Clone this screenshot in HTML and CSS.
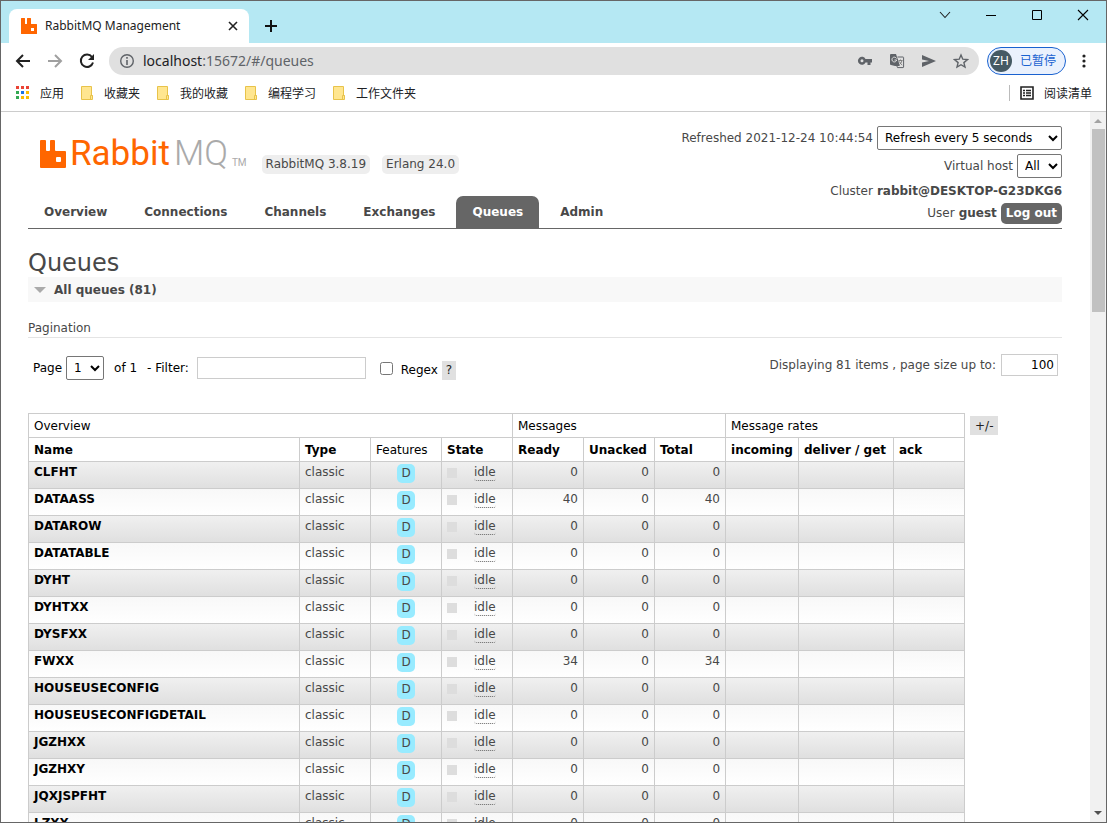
FILE: index.html
```html
<!DOCTYPE html>
<html lang="en">
<head>
<meta charset="utf-8">
<title>RabbitMQ Management</title>
<link rel="stylesheet" href="styles.css">
</head>
<body>
<div class="window">
  <div class="tabstrip">
    <div class="tab">
      <svg class="favicon" width="16" height="16" viewBox="0 0 16 16"><path fill="#f60" d="M.500 0h3q.500 0 .500.500v5q0 .500.500.500h1q.500 0 .500-.500v-5Q6 0 6.500 0h3q.500 0 .500.500v5q0 .500.500.500h5q.500 0 .500.500v9q0 .500-.500.500h-15Q0 16 0 15.500V.500Q0 0 .500 0zM10 10v3h3v-3z" fill-rule="evenodd"/></svg>
      <span class="tab-title">RabbitMQ Management</span>
      <button class="icon-btn" aria-label="Close tab"><svg width="10" height="10" viewBox="0 0 10 10"><path d="M1 1l8 8M9 1L1 9" stroke="#222" stroke-width="1.6"/></svg></button>
    </div>
    <button class="icon-btn new-tab" aria-label="New tab"><svg width="12" height="12" viewBox="0 0 12 12"><path d="M6 0v12M0 6h12" stroke="#111" stroke-width="2"/></svg></button>
    <div class="win-controls">
      <button class="icon-btn" aria-label="Search tabs"><svg width="12" height="12" viewBox="0 0 12 12"><path d="M1 3l5 5.500 5-5.500" fill="none" stroke="#222" stroke-width="1.100"/></svg></button>
      <button class="icon-btn" aria-label="Minimize"><svg width="12" height="12" viewBox="0 0 12 12"><path d="M1 6.500h10" stroke="#000"/></svg></button>
      <button class="icon-btn" aria-label="Maximize"><svg width="12" height="12" viewBox="0 0 12 12"><path d="M1.500 1.500h9v9h-9z" fill="none" stroke="#000"/></svg></button>
      <button class="icon-btn" aria-label="Close"><svg width="12" height="12" viewBox="0 0 12 12"><path d="M1 1l10 10M11 1L1 11" stroke="#000" stroke-width="1.100"/></svg></button>
    </div>
  </div>

  <div class="toolbar">
    <div class="nav-buttons">
      <button class="icon-btn" aria-label="Back"><svg width="16" height="16" viewBox="0 0 16 16"><path d="M15 8H2M8 2L2 8l6 6" fill="none" stroke="#222" stroke-width="2"/></svg></button>
      <button class="icon-btn" aria-label="Forward"><svg width="16" height="16" viewBox="0 0 16 16"><path d="M1 8h13M8 2l6 6-6 6" fill="none" stroke="#a0a0a0" stroke-width="2"/></svg></button>
      <button class="icon-btn" aria-label="Reload"><svg width="16" height="16" viewBox="0 0 16 16"><path d="M13 4A6.200 6.200 0 1 0 14 9.500" fill="none" stroke="#222" stroke-width="2"/><path d="M15 1v6H9z" fill="#222"/></svg></button>
    </div>
    <div class="omnibox">
      <svg width="16" height="16" viewBox="0 0 16 16"><circle cx="8" cy="8" r="6.300" fill="none" stroke="#5f6368" stroke-width="1.400"/><path d="M8 7v5M8 4v1.700" stroke="#5f6368" stroke-width="1.600"/></svg>
      <span class="url"><span class="host">localhost</span>:15672/#/queues</span>
      <button class="icon-btn" aria-label="Passwords"><svg width="16" height="16" viewBox="0 0 16 16"><path fill="#5f6368" fill-rule="evenodd" d="M8.500 6A4 4 0 1 0 8.500 9.500H10.500V12h3V9.500H15V6zM5 6.300A1.500 1.500 0 1 1 5 9.300 1.500 1.500 0 0 1 5 6.300z"/></svg></button>
      <button class="icon-btn" aria-label="Translate"><svg width="16" height="16" viewBox="0 0 16 16"><path fill="#5f6368" d="M2 1h5l1 3 4 9H6L2 12Q1 12 1 11V2q0-1 1-1z"/><path fill="#e0e0e0" d="M8.500 4.500h5.600v9.600H11z"/><path d="M8.500 4H14q.6 0 .6.600V14q0 .6-.6.600H8.500L7.500 12" fill="none" stroke="#5f6368"/><path d="M7.500 5.500a2.400 2.400 0 1 0 .2 1.500H5.500" fill="none" stroke="#e0e0e0"/><path d="M9.500 7.500h4M11.500 6.500v1M13 7.500Q12.500 10 10.500 11.500M10.500 8.500Q11.500 11 13.200 12" fill="none" stroke="#777" stroke-width=".9"/></svg></button>
      <button class="icon-btn" aria-label="Send"><svg width="16" height="16" viewBox="0 0 16 16"><path fill="#5f6368" d="M1 2l14 6-14 6V9.500L8 8 1 6.500z"/></svg></button>
      <button class="icon-btn" aria-label="Bookmark"><svg width="16" height="16" viewBox="0 0 16 16"><path d="M8 2l1.800 4.200 4.600.4-3.500 3 1.100 4.500L8 11.700l-4 2.400 1.100-4.500-3.500-3 4.600-.4z" fill="none" stroke="#5f6368" stroke-width="1.400"/></svg></button>
    </div>
    <button class="profile"><span class="avatar">ZH</span><span class="profile-text">已暂停</span></button>
    <button class="icon-btn menu" aria-label="Menu"><svg width="4" height="14" viewBox="0 0 4 14"><g fill="#222"><circle cx="2" cy="2" r="1.600"/><circle cx="2" cy="7" r="1.600"/><circle cx="2" cy="12" r="1.600"/></g></svg></button>
  </div>

  <div class="bookmarks">
    <a class="bookmark" href="#"><svg width="14" height="14" viewBox="0 0 14 14"><g><path fill="#ea4335" d="M0 0h3v3H0zM5 0h3v3H5zM10 0h3v3h-3z"/><path fill="#34a853" d="M0 5h3v3H0zM0 10h3v3H0z"/><path fill="#1a73e8" d="M5 5h3v3H5z"/><path fill="#fbbc04" d="M10 5h3v3h-3zM5 10h3v3H5zM10 10h3v3h-3z"/></g></svg>应用</a>
    <a class="bookmark" href="#"><svg width="14" height="14" viewBox="0 0 14 14"><path d="M1.500.5h10v9h1v4h-11z" fill="#ffe690" stroke="#e8c34a"/><path d="M10.500 13V9.500h2" fill="none" stroke="#e8c34a"/></svg>收藏夹</a>
    <a class="bookmark" href="#"><svg width="14" height="14" viewBox="0 0 14 14"><path d="M1.500.5h10v9h1v4h-11z" fill="#ffe690" stroke="#e8c34a"/><path d="M10.500 13V9.500h2" fill="none" stroke="#e8c34a"/></svg>我的收藏</a>
    <a class="bookmark" href="#"><svg width="14" height="14" viewBox="0 0 14 14"><path d="M1.500.5h10v9h1v4h-11z" fill="#ffe690" stroke="#e8c34a"/><path d="M10.500 13V9.500h2" fill="none" stroke="#e8c34a"/></svg>编程学习</a>
    <a class="bookmark" href="#"><svg width="14" height="14" viewBox="0 0 14 14"><path d="M1.500.5h10v9h1v4h-11z" fill="#ffe690" stroke="#e8c34a"/><path d="M10.500 13V9.500h2" fill="none" stroke="#e8c34a"/></svg>工作文件夹</a>
    <a class="bookmark reading" href="#"><svg width="14" height="14" viewBox="0 0 14 14"><path d="M1 1h12v12H1z" fill="none" stroke="#222" stroke-width="1.600"/><path d="M3 4.500h2M6 4.500h5M3 7h2M6 7h5M3 9.500h2M6 9.500h5" stroke="#222" stroke-width="1.400"/></svg>阅读清单</a>
  </div>

  <div class="viewport">
    <div class="page">
      <header class="header">
        <div class="brand">
          <a class="logo" href="#">
            <svg width="26" height="28" viewBox="0 0 26 28"><path fill="#f60" d="M1 0h4q1 0 1 1v9q0 1 1 1h2q1 0 1-1V1q0-1 1-1h3q1 0 1 1v9q0 1 1 1h9q1 0 1 1v15q0 1-1 1H1q-1 0-1-1V1q0-1 1-1zM17 17q-1 0-1 1v3q0 1 1 1h3q1 0 1-1v-3q0-1-1-1z" fill-rule="evenodd"/></svg>
            <span class="wordmark">Rabbit<span class="mq">MQ</span></span><span class="tm">TM</span>
          </a>
          <span class="version">RabbitMQ 3.8.19</span>
          <span class="version">Erlang 24.0</span>
        </div>
        <div class="status">
          <div class="status-row tall"><label for="refresh">Refreshed 2021-12-24 10:44:54</label><select id="refresh" class="refresh"><option>Refresh every 5 seconds</option></select></div>
          <div class="status-row tall"><label for="vhost">Virtual host</label><select id="vhost" class="vhost"><option>All</option></select></div>
          <div class="status-row cluster">Cluster <b>rabbit@DESKTOP-G23DKG6</b></div>
          <div class="status-row user">User <b>guest</b><button class="logout">Log out</button></div>
        </div>
        <nav class="menu-tabs">
          <a href="#">Overview</a><a href="#">Connections</a><a href="#">Channels</a><a href="#">Exchanges</a><a class="selected" href="#">Queues</a><a href="#">Admin</a>
        </nav>
      </header>

      <main>
        <h1>Queues</h1>
        <h2><svg width="12" height="6" viewBox="0 0 12 6"><path d="M0 0h12L6 6z" fill="#aaa"/></svg>All queues (81)</h2>
        <h3>Pagination</h3>
        <div class="pagination">
          <label for="page">Page</label>
          <select id="page" class="page-select"><option>1</option></select>
          <span class="of">of 1</span>
          <label class="filter-label" for="filter">- Filter:</label>
          <input id="filter" class="filter" type="text">
          <input id="regex" class="regex" type="checkbox">
          <div class="regex-label"><label for="regex">Regex</label><button class="help">?</button></div>
          <div class="page-size"><label for="size">Displaying 81 items , page size up to:</label><input id="size" type="text" value="100"></div>
        </div>

        <div class="table-wrap">
          <table class="list">
            <colgroup><col class="c-name"><col class="c-std" span="6"><col class="c-in"><col class="c-get"><col class="c-std"></colgroup>
            <thead>
              <tr><th class="group" colspan="4">Overview</th><th class="group" colspan="3">Messages</th><th class="group" colspan="3">Message rates</th></tr>
              <tr><th>Name</th><th>Type</th><th class="group">Features</th><th>State</th><th>Ready</th><th>Unacked</th><th>Total</th><th>incoming</th><th>deliver / get</th><th>ack</th></tr>
            </thead>
            <tbody>
              <tr><td><a href="#">CLFHT</a></td><td>classic</td><td class="c"><abbr class="feat">D</abbr></td><td><span class="state"><i></i><abbr>idle</abbr></span></td><td class="r">0</td><td class="r">0</td><td class="r">0</td><td></td><td></td><td></td></tr>
              <tr><td><a href="#">DATAASS</a></td><td>classic</td><td class="c"><abbr class="feat">D</abbr></td><td><span class="state"><i></i><abbr>idle</abbr></span></td><td class="r">40</td><td class="r">0</td><td class="r">40</td><td></td><td></td><td></td></tr>
              <tr><td><a href="#">DATAROW</a></td><td>classic</td><td class="c"><abbr class="feat">D</abbr></td><td><span class="state"><i></i><abbr>idle</abbr></span></td><td class="r">0</td><td class="r">0</td><td class="r">0</td><td></td><td></td><td></td></tr>
              <tr><td><a href="#">DATATABLE</a></td><td>classic</td><td class="c"><abbr class="feat">D</abbr></td><td><span class="state"><i></i><abbr>idle</abbr></span></td><td class="r">0</td><td class="r">0</td><td class="r">0</td><td></td><td></td><td></td></tr>
              <tr><td><a href="#">DYHT</a></td><td>classic</td><td class="c"><abbr class="feat">D</abbr></td><td><span class="state"><i></i><abbr>idle</abbr></span></td><td class="r">0</td><td class="r">0</td><td class="r">0</td><td></td><td></td><td></td></tr>
              <tr><td><a href="#">DYHTXX</a></td><td>classic</td><td class="c"><abbr class="feat">D</abbr></td><td><span class="state"><i></i><abbr>idle</abbr></span></td><td class="r">0</td><td class="r">0</td><td class="r">0</td><td></td><td></td><td></td></tr>
              <tr><td><a href="#">DYSFXX</a></td><td>classic</td><td class="c"><abbr class="feat">D</abbr></td><td><span class="state"><i></i><abbr>idle</abbr></span></td><td class="r">0</td><td class="r">0</td><td class="r">0</td><td></td><td></td><td></td></tr>
              <tr><td><a href="#">FWXX</a></td><td>classic</td><td class="c"><abbr class="feat">D</abbr></td><td><span class="state"><i></i><abbr>idle</abbr></span></td><td class="r">34</td><td class="r">0</td><td class="r">34</td><td></td><td></td><td></td></tr>
              <tr><td><a href="#">HOUSEUSECONFIG</a></td><td>classic</td><td class="c"><abbr class="feat">D</abbr></td><td><span class="state"><i></i><abbr>idle</abbr></span></td><td class="r">0</td><td class="r">0</td><td class="r">0</td><td></td><td></td><td></td></tr>
              <tr><td><a href="#">HOUSEUSECONFIGDETAIL</a></td><td>classic</td><td class="c"><abbr class="feat">D</abbr></td><td><span class="state"><i></i><abbr>idle</abbr></span></td><td class="r">0</td><td class="r">0</td><td class="r">0</td><td></td><td></td><td></td></tr>
              <tr><td><a href="#">JGZHXX</a></td><td>classic</td><td class="c"><abbr class="feat">D</abbr></td><td><span class="state"><i></i><abbr>idle</abbr></span></td><td class="r">0</td><td class="r">0</td><td class="r">0</td><td></td><td></td><td></td></tr>
              <tr><td><a href="#">JGZHXY</a></td><td>classic</td><td class="c"><abbr class="feat">D</abbr></td><td><span class="state"><i></i><abbr>idle</abbr></span></td><td class="r">0</td><td class="r">0</td><td class="r">0</td><td></td><td></td><td></td></tr>
              <tr><td><a href="#">JQXJSPFHT</a></td><td>classic</td><td class="c"><abbr class="feat">D</abbr></td><td><span class="state"><i></i><abbr>idle</abbr></span></td><td class="r">0</td><td class="r">0</td><td class="r">0</td><td></td><td></td><td></td></tr>
              <tr><td><a href="#">LZXX</a></td><td>classic</td><td class="c"><abbr class="feat">D</abbr></td><td><span class="state"><i></i><abbr>idle</abbr></span></td><td class="r">0</td><td class="r">0</td><td class="r">0</td><td></td><td></td><td></td></tr>
            </tbody>
          </table>
          <button class="help columns">+/-</button>
        </div>
      </main>
    </div>
    <div class="scrollbar">
      <svg width="16" height="17" viewBox="0 0 16 17"><path d="M4 11l4-4 4 4z" fill="#a3a3a3"/></svg>
      <div class="track"><div class="thumb"></div></div>
      <svg width="16" height="17" viewBox="0 0 16 17"><path d="M4 6l4 4 4-4z" fill="#505050"/></svg>
    </div>
  </div>
</div>
</body>
</html>
```
FILE: styles.css
```css
* { box-sizing: border-box; }
body { margin: 0; font: 12px/16px "DejaVu Sans", Verdana, sans-serif; color: #484848; }
button, input, select { font: inherit; color: #000; margin: 0; }
a { color: inherit; text-decoration: none; }
svg { display: block; flex: none; }

.window { display: flex; flex-direction: column; height: 100vh; border: 1px solid #666; overflow: hidden; background: #fff; }
.icon-btn { display: flex; align-items: center; justify-content: center; flex: none; padding: 0; border: 0; background: none; }

/* Browser tab strip */
.tabstrip { display: flex; align-items: flex-end; flex: none; height: 42px; padding-left: 8px; background: #b5e8f3; font-family: "Noto Sans", sans-serif; }
.tab { display: flex; align-items: center; gap: 8px; width: 240px; height: 34px; padding: 0 11px 0 12px; border-radius: 8px 8px 0 0; background: #fff; }
.tab-title { flex: 1; color: #222; white-space: nowrap; }
.new-tab { width: 44px; height: 34px; }
.win-controls { display: flex; align-self: flex-start; gap: 34px; margin: 8px 17px 0 auto; }

/* Address bar */
.toolbar { display: flex; align-items: center; flex: none; height: 36px; padding: 0 20px 0 14px; font-family: "Noto Sans", "Noto Sans CJK SC", sans-serif; }
.nav-buttons { display: flex; gap: 16px; }
.omnibox { display: flex; align-items: center; gap: 16px; flex: 1; height: 28px; margin-left: 14px; padding: 0 10px; border-radius: 14px; background: #e0e0e0; }
.url { flex: 1; margin-left: -8px; font-size: 14px; color: #5f6368; }
.host { color: #202124; }
.profile { display: flex; align-items: center; gap: 8px; height: 28px; margin: 0 16px 0 8px; padding: 0 9px 0 2px; border: 1px solid #1a62d0; border-radius: 14px; background: #eaf1fd; }
.avatar { width: 22px; height: 22px; border-radius: 50%; background: #455a64; color: #fff; font-size: 12px; line-height: 22px; }
.profile-text { color: #1a62d0; }

/* Bookmarks */
.bookmarks { display: flex; align-items: center; flex: none; gap: 16px; height: 33px; padding: 0 14px 4px 15px; border-bottom: 1px solid #ccc; font-family: "Noto Sans CJK SC", sans-serif; color: #202124; }
.bookmark { display: flex; align-items: center; gap: 10px; }
.reading { margin-left: auto; padding-left: 10px; border-left: 1px solid #bbb; }

/* Page */
.viewport { display: flex; flex: 1; min-height: 0; }
.page { flex: 1; min-width: 0; padding: 14px 28px 0 27px; overflow: hidden; }
.header { display: grid; grid-template-columns: 1fr auto; border-bottom: 1px solid #666; }
.brand { display: flex; align-items: flex-end; gap: 12px; height: 48px; padding-left: 12px; }
.logo { display: flex; align-items: flex-end; height: 34px; margin-right: 3px; padding-bottom: 6px; }
.wordmark { margin-left: 4px; font: 35px/28px Roboto, sans-serif; color: #f60; }
.mq { margin-left: 4px; font-weight: 300; color: #aaa; }
.tm { margin-left: 4px; font: 10px/10px Roboto, sans-serif; color: #aaa; }
.version { padding: 1px 4px; border-radius: 5px; background: #eee; line-height: 17px; }
.status { grid-column: 2; grid-row: 1 / span 2; padding-bottom: 2px; }
.status-row { display: flex; align-items: center; justify-content: flex-end; gap: 4px; white-space: nowrap; }
.tall { height: 28px; align-items: flex-start; line-height: 24px; }
.cluster { height: 18px; }
.user { height: 26px; }
select { height: 24px; padding: 0 0 0 3px; border: 1px solid #767676; border-radius: 2px; background: #fff; }
.refresh { width: 185px; }
.vhost { width: 45px; }
.logout { height: 21px; padding: 0 5px; border: 0; border-radius: 5px; background: #666; color: #fff; font-weight: bold; }
.menu-tabs { display: flex; align-items: flex-end; gap: 5px; grid-row: 2; grid-column: 1; }
.menu-tabs a { padding: 8px 16px; border-radius: 7px 7px 0 0; font-weight: bold; }
.menu-tabs .selected { background: #666; color: #fff; }

h1 { margin: 21px 0 0; font-size: 24px; line-height: 27px; font-weight: normal; }
h2 { display: flex; align-items: center; gap: 8px; height: 25px; margin: 0; padding-left: 6px; background: #f8f8f8; font-size: 12px; }
h3 { margin: 18px 0 0; padding-bottom: 1px; border-bottom: 1px solid #e4e4e4; font-size: 12px; line-height: 16px; font-weight: normal; }
.pagination { display: flex; align-items: center; gap: 4px; height: 28px; margin-top: 16px; padding: 0 4px 0 5px; color: #000; white-space: nowrap; }
.page-select { width: 38px; }
.of { margin: 0 6px; }
.filter, .page-size input { height: 22px; padding: 0 3px; border: 1px solid #ccc; background: #fff; }
.filter { width: 169px; margin-left: 4px; }
.regex { width: 13px; height: 13px; margin: 0 4px 0 10px; }
.regex-label { display: flex; align-items: center; gap: 4px; padding-top: 4px; }
.page-size { display: flex; align-items: center; align-self: flex-start; gap: 5px; margin-left: auto; color: #484848; }
.page-size input { width: 57px; text-align: right; }
.help { height: 19px; padding: 0 4px; border: 0; background: #e0e0e0; color: #222; }

.table-wrap { display: flex; align-items: flex-start; gap: 5px; margin-top: 31px; }
.list { width: 937px; table-layout: fixed; border-collapse: collapse; }
.c-name { width: 271px; }
.c-std { width: 71px; }
.c-in { width: 73px; }
.c-get { width: 95px; }
th, td { padding: 0 5px; border: 1px solid #ccc; text-align: left; white-space: nowrap; }
th { height: 24px; color: #000; }
th.group { font-weight: normal; }
td { height: 27px; padding-top: 2px; vertical-align: top; }
td a { color: #000; font-weight: bold; }
tbody tr { background: linear-gradient(#f8f8f8, #fff); }
tbody tr:nth-child(odd) { background: linear-gradient(#f0f0f0, #dfdfdf); }
.r { text-align: right; }
.c { text-align: center; }
.feat { display: inline-block; padding: 1px 4px; border-radius: 5px; background: #98ebff; line-height: 17px; }
.state { display: flex; align-items: center; gap: 17px; }
.state i { width: 10px; height: 10px; background: #ddd; }
.state abbr { border-bottom: 1px dotted #666; border-radius: 3px; line-height: 16px; }
.columns { margin-top: 3px; padding: 0 5px; }

/* Scrollbar */
.scrollbar { display: flex; flex-direction: column; flex: none; width: 16px; background: #f1f1f1; }
.track { flex: 1; padding: 0 1px 0 2px; }
.thumb { height: 27%; background: #c1c1c1; }
```
